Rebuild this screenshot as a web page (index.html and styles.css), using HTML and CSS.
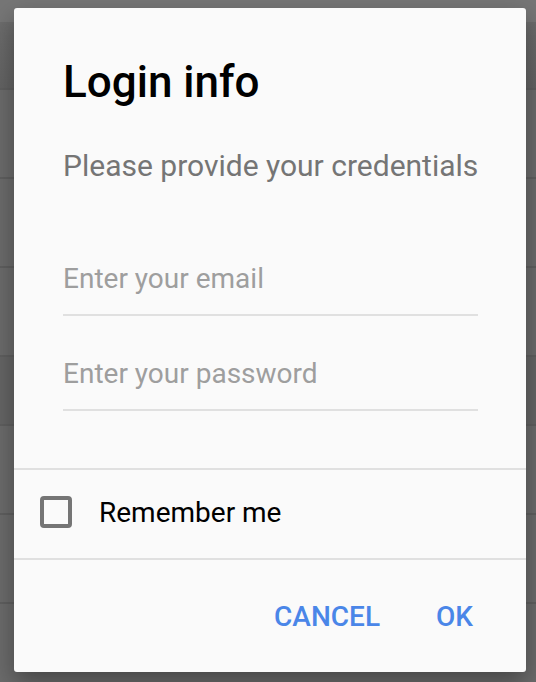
FILE: index.html
```html
<!DOCTYPE html>
<html lang="en">
<head>
<meta charset="UTF-8">
<meta name="viewport" content="width=device-width, initial-scale=1.0">
<title>Login info</title>
<link rel="stylesheet" href="styles.css">
</head>
<body>
<div class="screen">
  <div class="status-bar"></div>
  <div class="row row-head"></div>
  <div class="row"></div>
  <div class="row"></div>
  <div class="row"></div>
  <div class="row row-section"></div>
  <div class="row"></div>
  <div class="row"></div>
  <div class="row"></div>
</div>

<div class="dialog">
  <div class="dialog-body">
    <h1 class="title">Login info</h1>
    <p class="subtitle">Please provide your credentials</p>
    <input class="field" type="email" placeholder="Enter your email">
    <input class="field" type="password" placeholder="Enter your password">
  </div>
  <label class="remember">
    <input type="checkbox" class="check">
    <span>Remember me</span>
  </label>
  <div class="actions">
    <button class="btn">CANCEL</button>
    <button class="btn">OK</button>
  </div>
</div>
</body>
</html>
```

FILE: styles.css
```css
html, body {
  margin: 0;
  height: 100%;
}
body {
  font-family: Roboto, "Noto Sans", sans-serif;
  background: #6a6a6a;
  overflow: hidden;
}

/* pantalla de fondo, oscurecida */
.screen {
  height: 682px;
}
.status-bar {
  height: 22px;
  background: #767676;
}
.row {
  height: 87px;
  border-bottom: 2px solid #5f5f5f;
  background: #6b6b6b;
}
.row-head {
  height: 66px;
  background: linear-gradient(#6c6c6c, #636363);
}
.row-section {
  height: 67px;
  background: #656565;
}

/* dialogo */
.dialog {
  position: absolute;
  left: 14px;
  top: 8px;
  width: 512px;
  height: 664px;
  background: #fafafa;
  border-radius: 3px;
  box-shadow: 0 10px 24px rgba(0, 0, 0, 0.35);
  display: flex;
  flex-direction: column;
}
.dialog-body {
  padding: 48px 48px 57px 49px;
  display: flex;
  flex-direction: column;
  border-bottom: 2px solid #e0e0e0;
}
.title {
  margin: 0;
  font-size: 44px;
  line-height: 52px;
  font-weight: 500;
  color: #000;
}
.subtitle {
  margin: 40px -10px 0 0;
  font-size: 30px;
  line-height: 36px;
  color: #757575;
  white-space: nowrap;
}
.field {
  display: block;
  box-sizing: border-box;
  margin: 76px 0 0;
  padding: 0 0 18px;
  border: none;
  border-bottom: 2px solid #e0e0e0;
  background: transparent;
  font-family: inherit;
  font-size: 28px;
  line-height: 36px;
  height: 56px;
  color: #212121;
  outline: none;
  width: 100%;
}
.field + .field {
  margin-top: 39px;
}
.field::placeholder {
  color: #9e9e9e;
}

.remember {
  box-sizing: border-box;
  height: 90px;
  display: flex;
  align-items: center;
  padding: 0 0 4px 26px;
  border-bottom: 2px solid #e0e0e0;
  font-size: 28px;
  color: #000;
}
.check {
  appearance: none;
  -webkit-appearance: none;
  margin: 0 27px 0 0;
  width: 32px;
  height: 32px;
  border: 4px solid #757575;
  border-radius: 4px;
  background: #fafafa;
}

.actions {
  flex: 1;
  display: flex;
  justify-content: flex-end;
  align-items: center;
  padding-right: 37px;
  gap: 24px;
}
.btn {
  border: none;
  background: none;
  font-family: inherit;
  font-size: 28px;
  font-weight: 500;
  color: #4a86e8;
  padding: 8px 16px;
}
```
